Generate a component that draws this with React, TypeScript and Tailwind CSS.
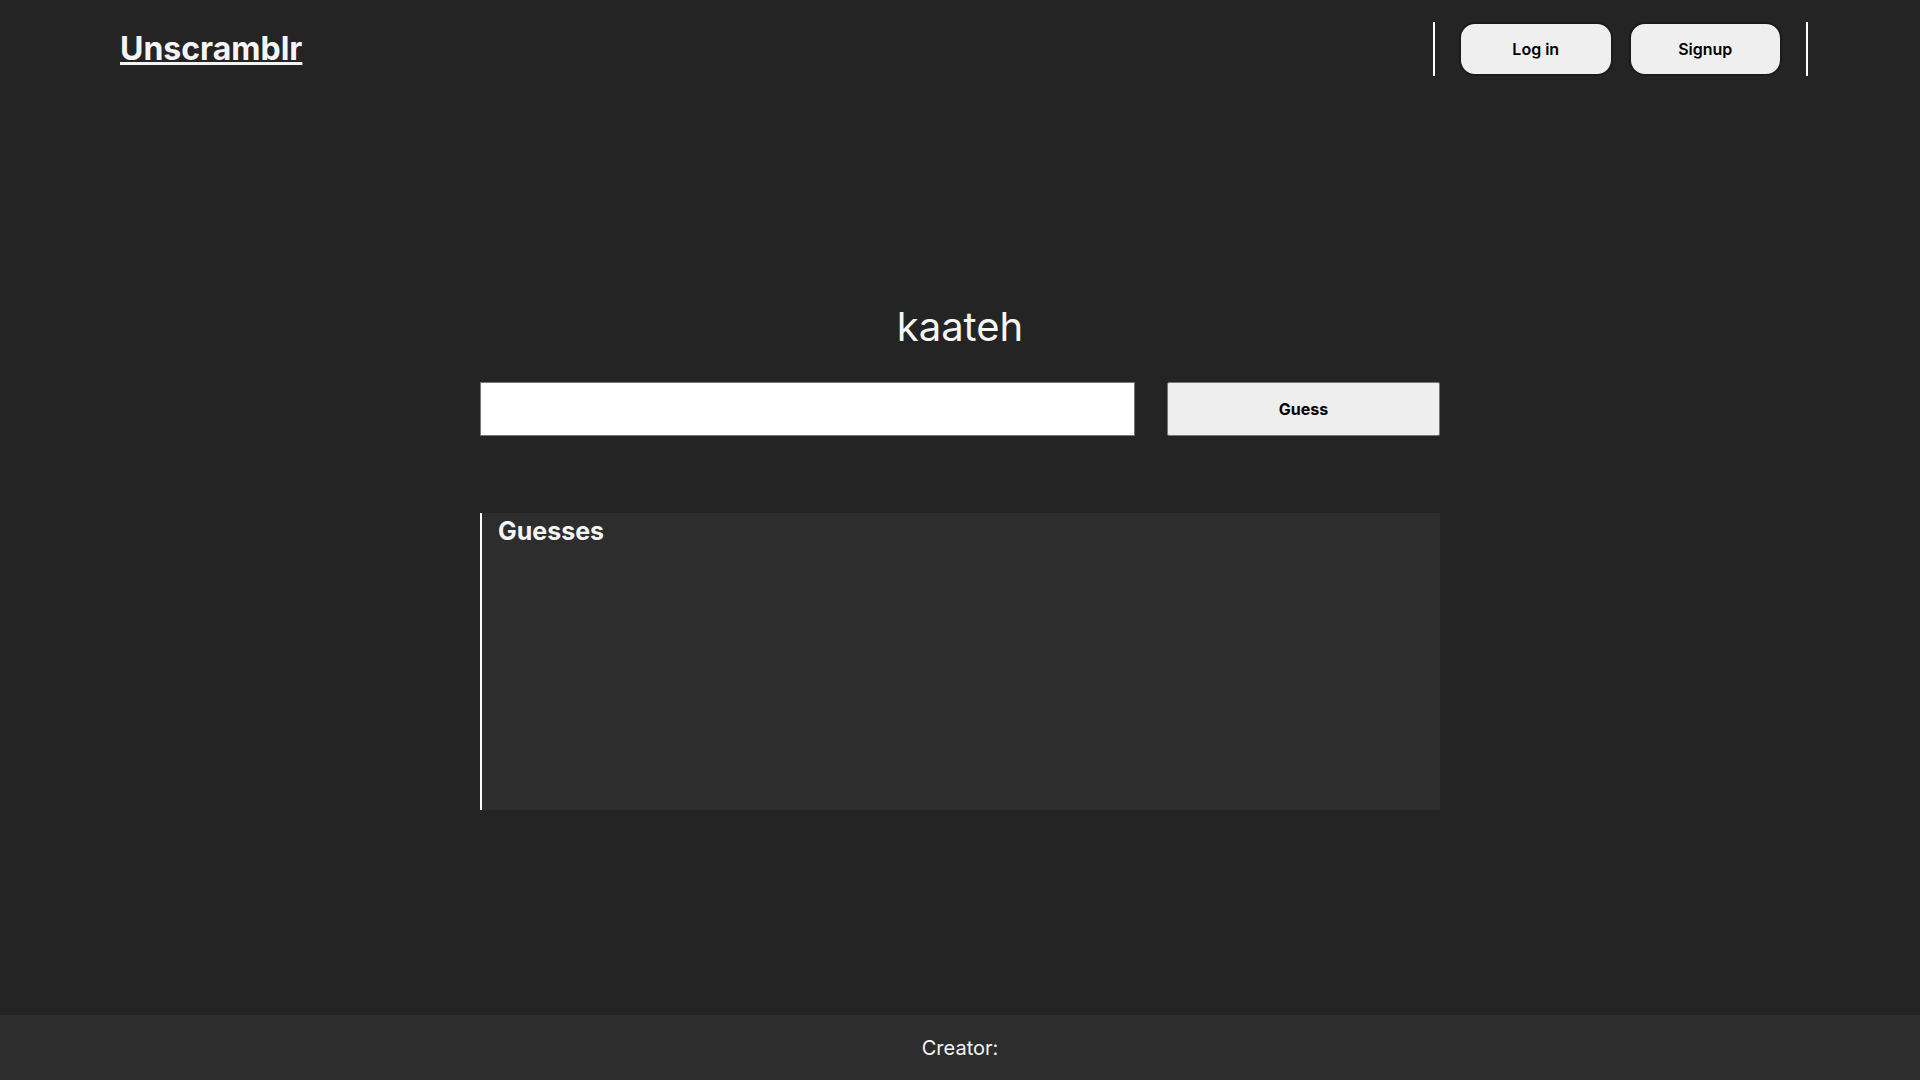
export default function App() {
  return (
    <div className="flex min-h-screen flex-col bg-[#242424] font-['Inter',sans-serif] text-[#f5f5f5]">
      <header className="flex items-center justify-between py-[22px] pr-28 pl-[120px]">
        <a
          href="/"
          className="text-[32px] leading-[54px] font-bold underline decoration-[3px] underline-offset-2 [text-decoration-skip-ink:none]"
        >
          Unscramblr
        </a>
        <nav className="flex w-[375px] gap-4 border-x-2 border-white px-6">
          <button
            type="button"
            className="h-[54px] flex-1 rounded-2xl border-2 border-[#1b1b1b] bg-[#efefef] text-base font-semibold text-black"
          >
            Log in
          </button>
          <button
            type="button"
            className="h-[54px] flex-1 rounded-2xl border-2 border-[#1b1b1b] bg-[#efefef] text-base font-semibold text-black"
          >
            Signup
          </button>
        </nav>
      </header>

      <main className="mx-auto flex w-1/2 flex-1 flex-col justify-center">
        <p className="text-center text-[40px] leading-[48px]">kaateh</p>
        <form
          className="mt-[31px] grid grid-cols-[12fr_5fr] gap-8"
          onSubmit={(e) => e.preventDefault()}
        >
          <input
            type="text"
            aria-label="Your guess"
            className="h-[54px] w-full border border-[#767676] bg-white px-3 text-base text-black"
          />
          <button
            type="submit"
            className="h-[54px] rounded-xs border border-[#767676] bg-[#eeeeee] text-base font-bold text-black"
          >
            Guess
          </button>
        </form>
        <section className="mt-[77px] min-h-[297px] border-l-2 border-white bg-[#2d2d2d] px-4">
          <h2 className="text-[25px] leading-9 font-bold">Guesses</h2>
        </section>
      </main>

      <footer className="bg-[#2d2d2d] pt-[17px] pb-4 text-center text-xl leading-8">Creator:</footer>
    </div>
  );
}
